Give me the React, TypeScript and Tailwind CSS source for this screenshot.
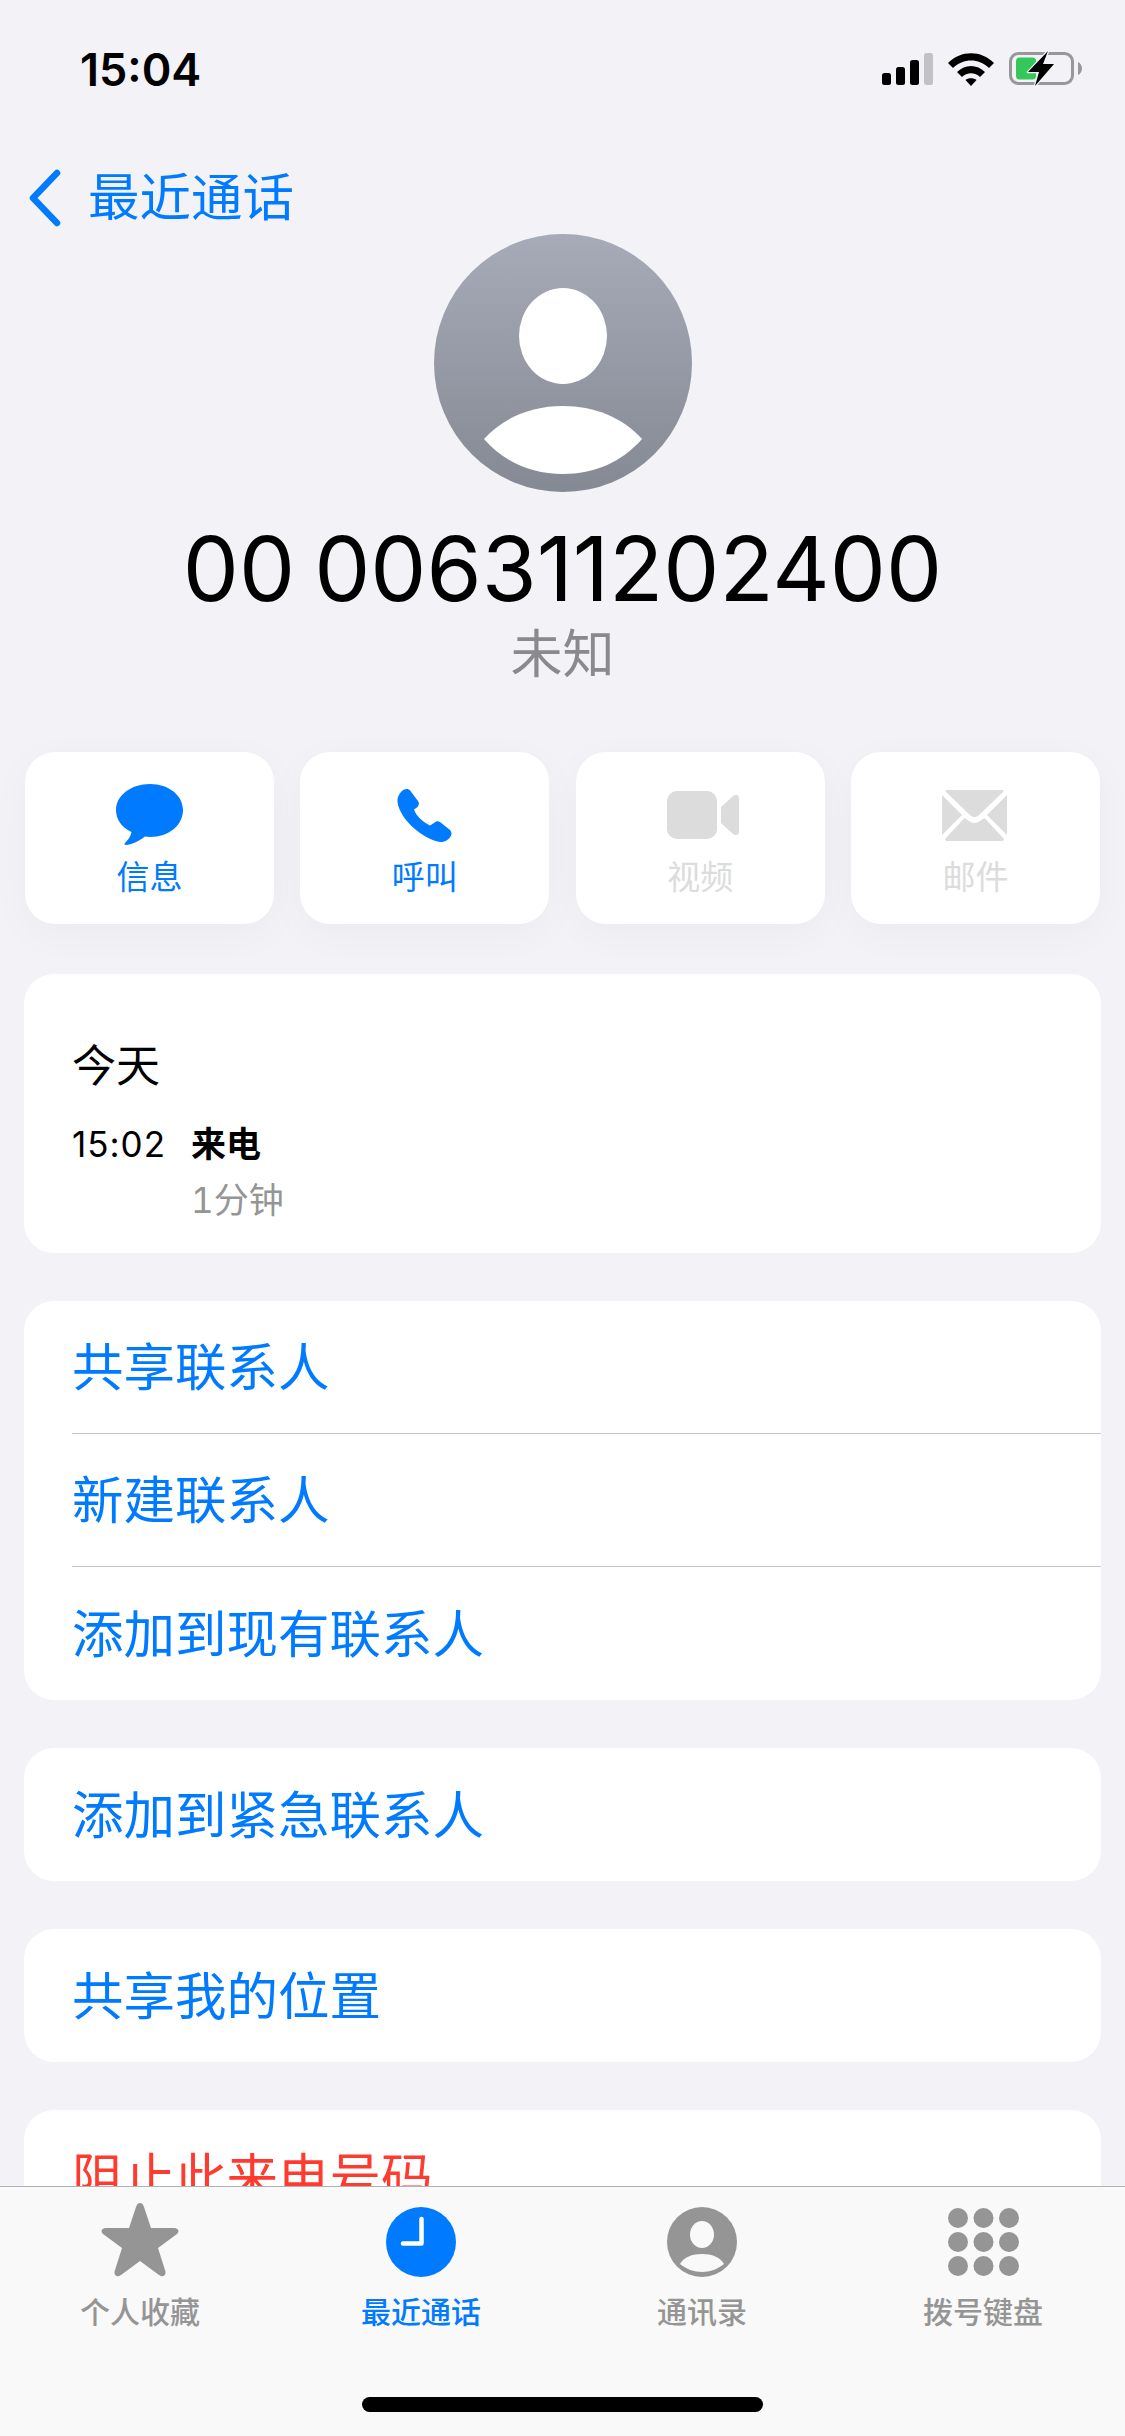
import type { ReactNode } from "react";

const cjk = "font-['Inter','Noto_Sans_CJK_SC',sans-serif]";

function Signal() {
  return (
    <svg width="51" height="32" viewBox="0 0 51 32">
      <rect x="0" y="20" width="9" height="12" rx="2.5" fill="#000" />
      <rect x="14" y="14" width="9" height="18" rx="2.5" fill="#000" />
      <rect x="28" y="7" width="9" height="25" rx="2.5" fill="#000" />
      <rect x="42" y="0" width="9" height="32" rx="2.5" fill="#c2c2c6" />
    </svg>
  );
}

function Wifi() {
  return (
    <svg width="46" height="33" viewBox="0 0 46 33">
      <path d="M0 10 C13 -3 33 -3 46 10 L41 15 C31 5 15 5 5 15 Z" fill="#000" />
      <path d="M9 19 C17 11 29 11 37 19 L32 24 C27 19 19 19 14 24 Z" fill="#000" />
      <path d="M17.5 27 C20 24.5 26 24.5 28.5 27 L23 33 Z" fill="#000" />
    </svg>
  );
}

function Battery() {
  return (
    <svg width="73" height="36" viewBox="0 0 73 36">
      <rect x="1.5" y="2.5" width="62" height="30" rx="8" fill="none" stroke="#98989c" strokeWidth="3" />
      <path d="M69 11 C71.5 12 73 15 73 17.5 C73 20 71.5 23 69 24 Z" fill="#98989c" />
      <rect x="7" y="6.5" width="20" height="22" rx="3.5" fill="#34c759" />
      <path d="M39 0 L19 21 L30 21 L26 35 L45 13 L34 13 Z" fill="#000" stroke="#f2f2f7" strokeWidth="2.5" paintOrder="stroke" strokeLinejoin="round" />
    </svg>
  );
}

function Avatar() {
  return (
    <svg width="258" height="258" viewBox="0 0 258 258">
      <defs>
        <linearGradient id="avatarFill" x1="0" y1="0" x2="0" y2="1">
          <stop offset="0" stopColor="#a6abb7" />
          <stop offset="1" stopColor="#858994" />
        </linearGradient>
      </defs>
      <circle cx="129" cy="129" r="129" fill="url(#avatarFill)" />
      <ellipse cx="129" cy="102" rx="44" ry="48" fill="#fff" />
      <path d="M50 205 C70 183 98 172 129 172 C160 172 188 183 208 205 C188 228 160 240 129 240 C98 240 70 228 50 205 Z" fill="#fff" />
    </svg>
  );
}

function MessageIcon() {
  return (
    <svg width="68" height="62" viewBox="0 0 68 62">
      <path d="M34 0 C53 0 67 11.5 67 26 C67 41 53 53 34 53 C32 53 30.5 52.8 29 52.5 C23 57 15 61 10 61 C8.5 61 8 60 9 59 C12 56 15 52 15.5 48 C5 43 0 35 0 26 C0 11.5 15 0 34 0 Z" fill="#007aff" />
    </svg>
  );
}

function PhoneIcon() {
  return (
    <svg width="55" height="55" viewBox="0 0 55 55">
      <path d="M4 4 C7 0.5 11 0 13.5 3 L21 13 C22.5 15 22 17 20.5 19 L17 21.5 C19 28 27 35 33 37.5 L37 35 C39 33 41 32.5 43 34 L53 42 C55 44 55 47 53 49.5 C50 53 46 54.5 43 54 C26 51 3 32 0.5 14 C0 10 1.5 7 4 4 Z" fill="#007aff" />
    </svg>
  );
}

function VideoIcon() {
  return (
    <svg className="ml-[5px]" width="72" height="48" viewBox="0 0 72 48">
      <rect x="0" y="0" width="50" height="48" rx="10" fill="#dcdcdc" />
      <path d="M54 16 L66 5 C68 3.5 72 3.5 72 7 L72 41 C72 44.5 68 44.5 66 43 L54 32 Z" fill="#dcdcdc" />
    </svg>
  );
}

function MailIcon() {
  return (
    <svg className="mr-[2px]" width="65" height="51" viewBox="0 0 65 51">
      <path d="M5 0 L60 0 C61.5 0 62 1 61 2 L36 26 C34 27.5 31 27.5 29 26 L4 2 C3 1 3.5 0 5 0 Z" fill="#dcdcdc" />
      <path d="M0 5 L20 25 L0 45 Z" fill="#dcdcdc" />
      <path d="M65 5 L45 25 L65 45 Z" fill="#dcdcdc" />
      <path d="M22.5 28 L27 31 C31 33.5 34 33.5 38 31 L42.5 28 L62 49 C62 50.5 61 51 60 51 L5 51 C4 51 3 50.5 3 49 Z" fill="#dcdcdc" />
    </svg>
  );
}

function StarIcon() {
  return (
    <svg className="mb-[4px]" width="78" height="74" viewBox="0 0 78 74">
      <path d="M39 0 C41 0 42 1.5 43 4 L50 25 L73 25 C77 25 79 28 76 31 L57 45 L64 67 C66 72 62 75 58 72 L39 58 L20 72 C16 75 12 72 14 67 L21 45 L2 31 C-1 28 1 25 5 25 L28 25 L35 4 C36 1.5 37 0 39 0 Z" fill="#959595" />
    </svg>
  );
}

function ClockIcon() {
  return (
    <svg width="70" height="70" viewBox="0 0 70 70">
      <circle cx="35" cy="35" r="35" fill="#007aff" />
      <path d="M35.5 12 L35.5 36.5 L17 36.5" fill="none" stroke="#fff" strokeWidth="4.5" strokeLinecap="round" strokeLinejoin="round" />
    </svg>
  );
}

function PersonIcon() {
  return (
    <svg width="70" height="70" viewBox="0 0 70 70">
      <circle cx="35" cy="35" r="35" fill="#959595" />
      <ellipse cx="35" cy="27.5" rx="12" ry="13.5" fill="#f9f9f9" />
      <path d="M13 57 C17 50 25 47 35 47 C45 47 53 50 57 57 C51 62 43 65 35 65 C27 65 19 62 13 57 Z" fill="#f9f9f9" />
    </svg>
  );
}

function KeypadIcon() {
  return (
    <svg width="71" height="68" viewBox="0 0 71 68">
      {[10, 34, 58].map((cy) =>
        [10, 35.5, 61].map((cx) => <circle key={`${cx}-${cy}`} cx={cx} cy={cy} r="10" fill="#959595" />)
      )}
    </svg>
  );
}

function ActionButton({ icon, label, active }: { icon: ReactNode; label: string; active?: boolean }) {
  return (
    <div className="flex h-[172px] w-[249px] flex-col items-center rounded-[30px] bg-white shadow-[0_10px_40px_rgba(0,0,0,0.035)]">
      <div className="mt-[30px] flex h-[66px] items-center justify-center">{icon}</div>
      <div className={`mt-[7px] text-[33px] leading-[44px] ${active ? "text-[#007aff]" : "text-[#dcdcdc]"}`}>{label}</div>
    </div>
  );
}

function LinkRow({ label, divider, color }: { label: string; divider?: boolean; color?: string }) {
  return (
    <div className="ml-[48px] flex h-[133px] items-center">
      <div
        className={`flex h-full flex-1 items-center pt-[2px] text-[51.5px] ${color ?? "text-[#007aff]"} ${divider ? "border-b-[1.5px] border-[#c6c6c8]" : ""}`}
      >
        {label}
      </div>
    </div>
  );
}

function TabItem({ icon, label, active }: { icon: ReactNode; label: string; active?: boolean }) {
  return (
    <div className="flex w-[180px] flex-col items-center">
      <div className="flex h-[78px] items-center justify-center">{icon}</div>
      <div className={`mt-[11px] text-[30px] font-medium leading-[40px] ${active ? "text-[#007aff]" : "text-[#959595]"}`}>
        {label}
      </div>
    </div>
  );
}

export default function App() {
  return (
    <div className={`flex h-[2436px] w-[1125px] flex-col overflow-hidden bg-[#f2f2f7] ${cjk}`}>
      <div className="min-h-0 flex-1 overflow-hidden">
        <div className="flex h-[138px] items-center justify-between pl-[80px] pr-[43px]">
          <div className="text-[45px] font-semibold leading-none text-black">15:04</div>
          <div className="flex items-center gap-[15px]">
            <Signal />
            <Wifi />
            <Battery />
          </div>
        </div>

        <div className="mt-[30px] flex h-[60px] items-center pl-[28px] text-[51.5px] leading-none text-[#007aff]">
          <svg width="34" height="58" viewBox="0 0 34 58" fill="none">
            <path d="M29 4 L5 29 L29 54" stroke="#007aff" strokeWidth="6.5" strokeLinecap="round" strokeLinejoin="round" />
          </svg>
          <span className="ml-[26px]">最近通话</span>
        </div>

        <div className="mt-[6px] flex justify-center">
          <Avatar />
        </div>
        <div className="mt-[31px] text-center text-[89px] leading-[92px] text-black [word-spacing:-6px]">00 006311202400</div>
        <div className="mt-[10px] text-center text-[52px] leading-[60px] text-[#8a8a8e]">未知</div>

        <div className="mt-[67px] flex justify-between px-[25px]">
          <ActionButton icon={<MessageIcon />} label="信息" active />
          <ActionButton icon={<PhoneIcon />} label="呼叫" active />
          <ActionButton icon={<VideoIcon />} label="视频" />
          <ActionButton icon={<MailIcon />} label="邮件" />
        </div>

        <div className="mx-[24px] mt-[50px] flex h-[279px] flex-col rounded-[30px] bg-white pl-[48px] pt-[67px]">
          <div className="text-[44px] leading-[50px] text-black">今天</div>
          <div className="mt-[31px] flex items-center">
            <div className="w-[119px] text-[35px] leading-[44px] tracking-[1px] text-black">15:02</div>
            <div className="text-[35px] font-semibold leading-[44px] text-black">来电</div>
          </div>
          <div className="ml-[119px] mt-[12px] text-[35px] leading-[44px] tabular-nums text-[#959595]">1分钟</div>
        </div>

        <div className="mx-[24px] mt-[48px] rounded-[30px] bg-white">
          <LinkRow label="共享联系人" divider />
          <LinkRow label="新建联系人" divider />
          <LinkRow label="添加到现有联系人" />
        </div>

        <div className="mx-[24px] mt-[48px] rounded-[30px] bg-white">
          <LinkRow label="添加到紧急联系人" />
        </div>

        <div className="mx-[24px] mt-[48px] rounded-[30px] bg-white">
          <LinkRow label="共享我的位置" />
        </div>

        <div className="mx-[24px] mt-[48px] rounded-[30px] bg-white">
          <LinkRow label="阻止此来电号码" color="text-[#ff3b30]" />
        </div>
      </div>

      <div className="flex h-[250px] flex-col items-center border-t-[1.5px] border-[#b2b2b2] bg-[#f9f9f9]">
        <div className="flex w-full justify-between pl-[50px] pr-[52px] pt-[16px]">
          <TabItem icon={<StarIcon />} label="个人收藏" />
          <TabItem icon={<ClockIcon />} label="最近通话" active />
          <TabItem icon={<PersonIcon />} label="通讯录" />
          <TabItem icon={<KeypadIcon />} label="拨号键盘" />
        </div>
        <div className="mt-[65px] h-[15px] w-[401px] rounded-full bg-black" />
      </div>
    </div>
  );
}
